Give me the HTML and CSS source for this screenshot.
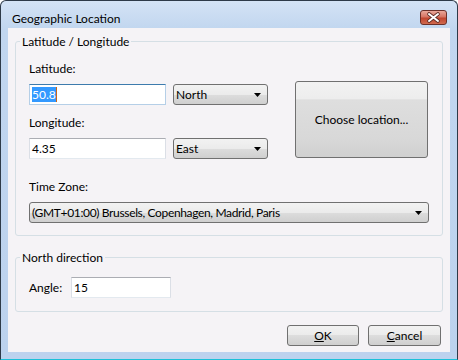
FILE: index.html
```html
<!DOCTYPE html>
<html lang="en">
<head>
    <meta charset="UTF-8">
    <title>Geographic Location</title>
    <link rel="stylesheet" href="styles.css">
</head>
<body>

<div class="window">
    <div class="titlebar">
        <span class="title">Geographic Location</span>
        <div class="close">
            <svg width="27" height="15" viewBox="0 0 27 15">
                <path d="M9 4 L18 11 M18 4 L9 11" stroke="#5b2a24" stroke-width="3.6" stroke-linecap="round"/>
                <path d="M9 4 L18 11 M18 4 L9 11" stroke="#ffffff" stroke-width="2" stroke-linecap="round"/>
            </svg>
        </div>
    </div>

    <div class="client">
        <fieldset class="group">
            <legend>Latitude / Longitude</legend>
            <div class="group-body">
                <div class="coords">
                    <div class="coord-fields">
                        <div class="label">Latitude:</div>
                        <div class="row">
                            <div class="field focused"><span class="sel">50.8</span><span class="caret"></span></div>
                            <div class="combo">
                                <span>North</span>
                                <svg class="arrow" width="7" height="4" viewBox="0 0 7 4"><path d="M0 0 H7 L3.5 4 Z" fill="#000"/></svg>
                            </div>
                        </div>
                        <div class="label">Longitude:</div>
                        <div class="row">
                            <div class="field">4.35</div>
                            <div class="combo">
                                <span>East</span>
                                <svg class="arrow" width="7" height="4" viewBox="0 0 7 4"><path d="M0 0 H7 L3.5 4 Z" fill="#000"/></svg>
                            </div>
                        </div>
                    </div>
                    <div class="btn big">Choose location...</div>
                </div>

                <div class="label">Time Zone:</div>
                <div class="combo wide">
                    <span class="tz">(GMT+01:00) Brussels, Copenhagen, Madrid, Paris</span>
                    <svg class="arrow" width="7" height="4" viewBox="0 0 7 4"><path d="M0 0 H7 L3.5 4 Z" fill="#000"/></svg>
                </div>
            </div>
        </fieldset>

        <fieldset class="group north">
            <legend>North direction</legend>
            <div class="group-body angle-row">
                <span class="angle-label">Angle:</span>
                <div class="field angle">15</div>
            </div>
        </fieldset>

        <div class="actions">
            <div class="btn ok"><u>O</u>K</div>
            <div class="btn cancel"><u>C</u>ancel</div>
        </div>
    </div>
</div>

</body>
</html>
```

FILE: styles.css
```css
body {
    margin: 0;
    font-family: Lato, "Noto Sans", sans-serif;
    font-size: 12px;
    color: #000;
    background: #fff;
}

.window {
    width: 458px;
    height: 360px;
    box-sizing: border-box;
    display: flex;
    flex-direction: column;
    padding: 0 7px 7px;
    border: 1px solid #2e3a48;
    border-bottom-color: #1cc0d8;
    border-radius: 6px 6px 0 0;
    background: linear-gradient(#d4e3f5, #c1d6ef 28px, #bcd2ee);
}

.titlebar {
    height: 27px;
    display: flex;
    justify-content: space-between;
    align-items: flex-start;
}

.title {
    margin: 10px 0 0 4px;
    line-height: 15px;
}

.close {
    width: 27px;
    height: 15px;
    box-sizing: border-box;
    margin: 9px 3px 0 0;
    border: 1px solid #6b3029;
    border-radius: 3px;
    background: linear-gradient(#eaa79a, #d67563 45%, #c0452f 55%, #d06a4f);
    display: flex;
    align-items: center;
    justify-content: center;
}

.close svg {
    display: block;
    margin: -1px;
}

.client {
    flex: 1;
    background: #f5f3f6;
    display: flex;
    flex-direction: column;
}

.group {
    margin: 6px 7px 0;
    padding: 0;
    min-width: 0;
    border: 1px solid #d5dfe5;
    border-radius: 3px;
}

.group legend {
    margin-left: 4px;
    padding: 0 2px;
    line-height: 15px;
}

.group-body {
    padding: 12px 13px 12px;
}

.label {
    line-height: 15px;
    margin-bottom: 8px;
}

.coords {
    display: flex;
    align-items: flex-start;
    margin-bottom: 20px;
}

.coord-fields {
    width: 239px;
}

.coord-fields .label + .row + .label {
    margin-top: 10px;
}

.row {
    display: flex;
    gap: 7px;
}

.field {
    width: 137px;
    height: 21px;
    box-sizing: border-box;
    padding: 0 2px;
    line-height: 19px;
    background: #fff;
    border: 1px solid #dbdfe6;
    border-top-color: #abadb3;
    border-bottom-color: #e3e9ef;
    display: flex;
    align-items: center;
}

.field.focused {
    border-color: #b5cfe7;
    border-top-color: #3d7bad;
}

.sel {
    background: #3399ff;
    color: #fff;
    line-height: 15px;
}

.caret {
    width: 1px;
    height: 15px;
    background: #c8661c;
}

.combo {
    width: 95px;
    height: 21px;
    box-sizing: border-box;
    padding: 0 6px 0 2px;
    border: 1px solid #707070;
    border-radius: 3px;
    background: linear-gradient(#f2f2f2, #ebebeb 50%, #dddddd 50%, #cfcfcf);
    display: flex;
    align-items: center;
    justify-content: space-between;
}

.combo.wide {
    width: 400px;
}

.tz {
    letter-spacing: -0.35px;
}

.btn {
    height: 21px;
    box-sizing: border-box;
    border: 1px solid #707070;
    border-radius: 3px;
    background: linear-gradient(#f2f2f2, #ebebeb 50%, #dddddd 50%, #cfcfcf);
    display: flex;
    align-items: center;
    justify-content: center;
}

.btn.big {
    width: 133px;
    height: 77px;
    margin: 20px 0 0 27px;
    background: linear-gradient(#f2f2f2, #ededed 22%, #dedede 24%, #d8d8d8 75%, #d0d0d0);
}

.north {
    margin-top: 14px;
}

.angle-row {
    display: flex;
    align-items: center;
    padding-bottom: 13px;
}

.angle-label {
    width: 42px;
}

.field.angle {
    width: 100px;
}

.actions {
    display: flex;
    justify-content: flex-end;
    gap: 9px;
    margin-top: 13px;
    padding-right: 9px;
}

.btn.ok {
    width: 72px;
}

.btn.cancel {
    width: 73px;
}
```
